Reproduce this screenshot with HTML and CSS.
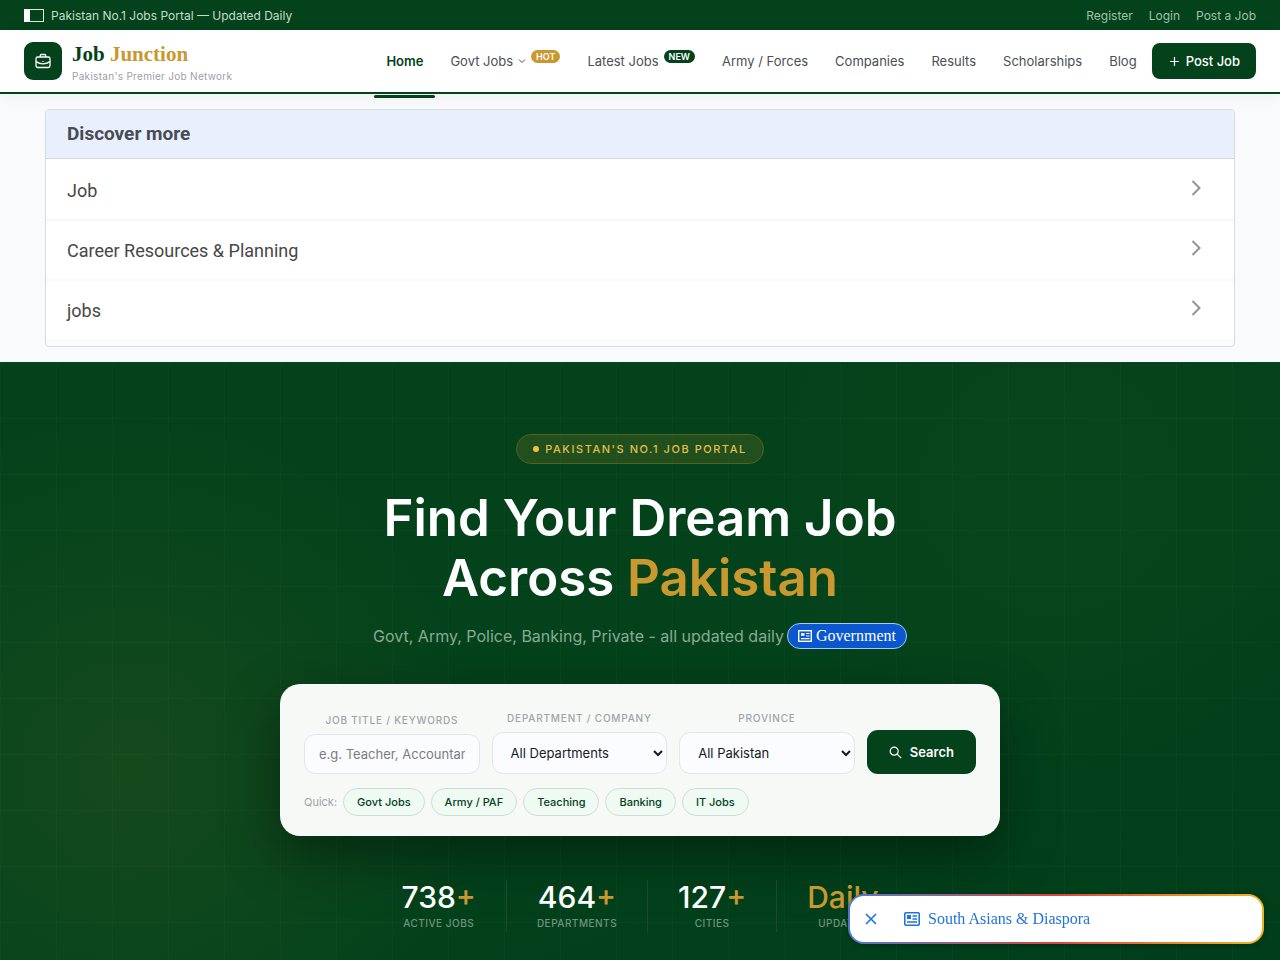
FILE: index.html
```
<!DOCTYPE html>
<html lang="en">
<head>
	<meta charset="utf-8">
	<meta name="viewport" content="width=device-width, initial-scale=1">
	<title>Job Junction</title>
	<link rel="stylesheet" href="styles.css">
</head>

<body>

	<div class="topbar">
		<div class="topbar-left">
			<span class="flag"></span>
			<span>Pakistan No.1 Jobs Portal — Updated Daily</span>
		</div>
		<div class="topbar-links">
			<a href="#">Register</a>
			<a href="#">Login</a>
			<a href="#">Post a Job</a>
		</div>
	</div>

	<header class="header">
		<a href="#" class="brand">
			<span class="brand-icon">
				<svg width="16" height="16" viewBox="0 0 16 16" fill="none" stroke="#fff" stroke-width="1.3" stroke-linejoin="round">
					<rect x="1" y="4" width="14" height="10.5" rx="1.8"/>
					<path d="M5.3 4V2.5a1 1 0 0 1 1-1h3.4a1 1 0 0 1 1 1V4M1 8.600c2 1.400 4.300 2.200 7 2.200s5-.8 7-2.200M8 8v1"/>
				</svg>
			</span>
			<span class="brand-text">
				<span class="brand-name">Job <em>Junction</em></span>
				<span class="brand-tag">Pakistan's Premier Job Network</span>
			</span>
		</a>
		<nav class="nav">
			<a href="#" class="active">Home</a>
			<a href="#">Govt Jobs
				<svg class="caret" width="8" height="8" viewBox="0 0 8 8" fill="none" stroke="currentColor"><path d="M1 2.500l3 3 3-3"/></svg>
				<span class="tag tag-hot">HOT</span>
			</a>
			<a href="#">Latest Jobs <span class="tag tag-new">NEW</span></a>
			<a href="#">Army / Forces</a>
			<a href="#">Companies</a>
			<a href="#">Results</a>
			<a href="#">Scholarships</a>
			<a href="#">Blog</a>
			<a href="#" class="post-btn">
				<svg width="9" height="9" viewBox="0 0 9 9" stroke="currentColor" stroke-width="1.200"><path d="M4.500 0v9M0 4.500h9"/></svg>
				Post Job
			</a>
		</nav>
	</header>

	<section class="discover">
		<h2>Discover more</h2>
		<a href="#">Job
			<svg width="11" height="18" viewBox="0 0 11 18" fill="none" stroke="currentColor" stroke-width="2"><path d="M1.500 2l7 7-7 7"/></svg>
		</a>
		<a href="#">Career Resources &amp; Planning
			<svg width="11" height="18" viewBox="0 0 11 18" fill="none" stroke="currentColor" stroke-width="2"><path d="M1.500 2l7 7-7 7"/></svg>
		</a>
		<a href="#">jobs
			<svg width="11" height="18" viewBox="0 0 11 18" fill="none" stroke="currentColor" stroke-width="2"><path d="M1.500 2l7 7-7 7"/></svg>
		</a>
	</section>

	<main class="hero">
		<div class="badge"><i></i>Pakistan's No.1 Job Portal</div>
		<h1>Find Your Dream Job<br>Across <span>Pakistan</span></h1>
		<p class="lead">
			<span>Govt, Army, Police, Banking, Private - all updated daily</span>
			<a href="#" class="gov">
				<svg width="14" height="12" viewBox="0 0 14 12" fill="none" stroke="currentColor"><rect x=".7" y=".7" width="12.600" height="10.600" stroke-width="1.400"/><path d="M3 4.500h3.500" stroke-width="2.600"/><path d="M8 3.500h3.500M8 6h3.500M3 8.700h8.500" stroke-width="1.200"/></svg>
				Government
			</a>
		</p>

		<form class="search">
			<div class="search-row">
				<div class="field">
					<label for="keywords">Job Title / Keywords</label>
					<input type="text" id="keywords" placeholder="e.g. Teacher, Accountant">
				</div>
				<div class="field">
					<label for="department">Department / Company</label>
					<select id="department"><option>All Departments</option></select>
				</div>
				<div class="field">
					<label for="province">Province</label>
					<select id="province"><option>All Pakistan</option></select>
				</div>
				<button type="submit" class="search-btn">
					<svg width="13" height="13" viewBox="0 0 13 13" fill="none" stroke="currentColor" stroke-width="1.200"><circle cx="5.200" cy="5.200" r="4"/><path d="M8.200 8.200l4 4"/></svg>
					Search
				</button>
			</div>
			<div class="quick">
				<span>Quick:</span>
				<a href="#">Govt Jobs</a>
				<a href="#">Army / PAF</a>
				<a href="#">Teaching</a>
				<a href="#">Banking</a>
				<a href="#">IT Jobs</a>
			</div>
		</form>

		<div class="stats">
			<div class="stat"><strong>738<b>+</b></strong><span>Active Jobs</span></div>
			<div class="stat"><strong>464<b>+</b></strong><span>Departments</span></div>
			<div class="stat"><strong>127<b>+</b></strong><span>Cities</span></div>
			<div class="stat"><strong><b>Daily</b></strong><span>Updates</span></div>
		</div>
	</main>

	<div class="toast">
		<button type="button" aria-label="Close">
			<svg width="12" height="12" viewBox="0 0 12 12" stroke="currentColor" stroke-width="1.700"><path d="M1 1l10 10M11 1L1 11"/></svg>
		</button>
		<a href="#">
			<svg width="16" height="14" viewBox="0 0 16 14" fill="none" stroke="currentColor"><rect x=".8" y=".8" width="14.400" height="12.400" rx="1" stroke-width="1.600"/><path d="M3 5h4" stroke-width="4"/><path d="M8.500 4H13M8.500 7H13M3 10h10" stroke-width="1.400"/></svg>
			South Asians &amp; Diaspora
		</a>
	</div>

</body>
</html>
```
FILE: styles.css
```
* {
	box-sizing: border-box;
	margin: 0;
	padding: 0;
}
body {
	font-family: Inter, "Open Sans", sans-serif;
	font-size: 13px;
	color: #4a4f55;
	background: #f8fafc;
}
a {
	color: inherit;
	text-decoration: none;
}

/* top bar */
.topbar {
	display: flex;
	justify-content: space-between;
	align-items: center;
	height: 30px;
	padding: 0 24px;
	font-size: 12px;
	color: #c4dccb;
	background: #03421b;
}
.topbar-left {
	display: flex;
	align-items: center;
	gap: 7px;
}
.flag {
	width: 20px;
	height: 13px;
	border: 1px solid #dcebe0;
	border-left: 6px solid #fff;
}
.topbar-links {
	display: flex;
	gap: 16px;
	color: #9fc2aa;
}

/* header */
.header {
	display: flex;
	justify-content: space-between;
	align-items: center;
	height: 64px;
	padding: 0 24px;
	background: #fff;
	border-bottom: 2px solid #03421b;
	box-shadow: 0 2px 14px rgba(0,0,0,.05);
}
.brand {
	display: flex;
	align-items: center;
	gap: 10px;
}
.brand-icon {
	display: flex;
	align-items: center;
	justify-content: center;
	width: 38px;
	height: 38px;
	border-radius: 9px;
	background: #03421b;
}
.brand-text {
	display: flex;
	flex-direction: column;
	padding-top: 2px;
}
.brand-name {
	font: bold 21px/28px "Liberation Serif", serif;
	color: #03421b;
}
.brand-name em {
	font-style: normal;
	color: #c9982f;
}
.brand-tag {
	font-size: 10px;
	line-height: 16px;
	letter-spacing: .03em;
	color: #9a9fa6;
}
.nav {
	display: flex;
	align-items: center;
	gap: 3px;
	white-space: nowrap;
}
.nav a {
	position: relative;
	display: flex;
	align-items: center;
	gap: 5px;
	height: 36px;
	padding: 0 12px;
}
.nav .active {
	font-weight: 600;
	color: #03421b;
}
.nav .active::after {
	content: "";
	position: absolute;
	left: 0;
	right: 0;
	bottom: -19px;
	height: 3px;
	border-radius: 2px;
	background: #03421b;
}
.tag {
	padding: 0 5px;
	margin-bottom: 9px;
	font-size: 9px;
	line-height: 13px;
	font-weight: 600;
	color: #fff;
	border-radius: 7px;
}
.tag-hot {
	background: #c9982f;
}
.tag-new {
	background: #03421b;
}
.nav .post-btn {
	gap: 7px;
	padding: 0 16px 0 18px;
	font-weight: 500;
	color: #fff;
	border-radius: 8px;
	background: #03421b;
}

/* discover box */
.discover {
	margin: 15px 45px;
	padding-bottom: 7px;
	border: 1px solid #d5dbe1;
	border-radius: 4px;
	background: #fafbfb;
	font-family: Roboto, sans-serif;
	font-size: 18px;
	color: #474747;
	overflow: hidden;
}
.discover h2 {
	padding: 0 21px;
	font-size: 19px;
	line-height: 48px;
	color: #474b52;
	background: #e9effd;
	border-bottom: 1px solid #d5dbe1;
}
.discover a {
	display: flex;
	justify-content: space-between;
	align-items: center;
	height: 60px;
	padding: 0 32px 0 21px;
	background: #fff;
	border-top: 2px solid #f6f7f8;
}
.discover h2 + a {
	border-top-color: #fff;
}
.discover svg {
	margin-bottom: 5px;
	color: #929497;
}

/* hero */
.hero {
	display: flex;
	flex-direction: column;
	align-items: center;
	padding: 72px 24px 56px;
	text-align: center;
	color: #fff;
	background:
		linear-gradient(rgba(255,255,255,.025) 1px, transparent 1px) 0 0 / 56px 56px,
		linear-gradient(90deg, rgba(255,255,255,.025) 1px, transparent 1px) 0 0 / 56px 56px,
		radial-gradient(circle at 10% 65%, rgba(150,130,40,.12), transparent 360px),
		radial-gradient(circle at 82% 20%, rgba(201,152,47,.03), transparent 300px),
		linear-gradient(160deg, #03421b 0%, #03421b 60%, #003d1a 100%);
}
.badge {
	display: flex;
	align-items: center;
	gap: 6px;
	height: 30px;
	padding: 0 16px;
	font-size: 11px;
	font-weight: 500;
	letter-spacing: .14em;
	text-transform: uppercase;
	color: #e3bf4a;
	border: 1px solid #57601c;
	border-radius: 15px;
	background: rgba(201,152,47,.16);
}
.badge i {
	width: 6px;
	height: 6px;
	border-radius: 50%;
	background: #efc443;
}
.hero h1 {
	margin-top: 24px;
	font-size: 51px;
	line-height: 60px;
	font-weight: 600;
}
.hero h1 span {
	color: #c9982f;
}
.lead {
	display: flex;
	flex-wrap: wrap;
	align-items: center;
	justify-content: center;
	gap: 3px;
	margin-top: 15px;
	font-size: 16px;
	color: #88ab93;
}
.gov {
	display: flex;
	align-items: center;
	gap: 4px;
	height: 26px;
	padding: 0 10px;
	font-family: "Liberation Serif", serif;
	font-size: 16px;
	color: #fff;
	border: 1px solid #a9c8f2;
	border-radius: 13px;
	background: #0b57d0;
}
.search {
	width: 100%;
	max-width: 720px;
	margin-top: 35px;
	padding: 24px 24px 20px;
	border-radius: 20px;
	background: #f7f9f7;
	box-shadow: 0 20px 56px rgba(0,0,0,.4);
}
.search-row {
	display: flex;
	align-items: flex-end;
	gap: 12px;
}
.field {
	display: flex;
	flex: 1;
	flex-direction: column;
	gap: 4px;
	min-width: 0;
}
.field label {
	font-size: 10px;
	line-height: 20px;
	font-weight: 500;
	letter-spacing: .08em;
	text-transform: uppercase;
	white-space: nowrap;
	color: #9fa4a9;
}
.field input,
.field select {
	width: 100%;
	height: 42px;
	padding: 0 14px;
	font: 13px Inter, sans-serif;
	color: #16191f;
	border: 1px solid #e2e7ec;
	border-radius: 11px;
	background: #fafcff;
}
.field input {
	height: 40px;
}
.field input::placeholder {
	color: #7b7d80;
}
.field select {
	padding: 0 0 0 14px;
}
.search-btn {
	display: flex;
	align-items: center;
	gap: 8px;
	height: 44px;
	padding: 0 22px;
	font: 600 13px Inter, sans-serif;
	color: #fff;
	border: 0;
	border-radius: 11px;
	background: #03421b;
}
.quick {
	display: flex;
	flex-wrap: wrap;
	align-items: center;
	gap: 6px;
	margin-top: 14px;
	font-size: 11px;
	color: #a0a5a9;
}
.quick a {
	padding: 0 13px;
	line-height: 26px;
	font-weight: 500;
	color: #03421b;
	border: 1px solid #cddfd4;
	border-radius: 14px;
	background: #effaf3;
}
.stats {
	display: flex;
	justify-content: center;
	margin-top: 44px;
}
.stat {
	display: flex;
	flex-direction: column;
	padding: 0 30px;
	border-left: 1px solid #1b4a2d;
}
.stat:first-child {
	border-left: 0;
}
.stat strong {
	font-size: 30px;
	line-height: 34px;
	font-weight: 500;
}
.stat b {
	font-weight: 500;
	color: #c9982f;
}
.stat span {
	font-size: 10px;
	line-height: 18px;
	font-weight: 500;
	letter-spacing: .05em;
	text-transform: uppercase;
	color: #71937c;
}

/* floating suggestion, stays over the page */
.toast {
	position: fixed;
	right: 16px;
	bottom: 16px;
	display: flex;
	align-items: center;
	gap: 27px;
	width: 416px;
	max-width: calc(100% - 32px);
	height: 50px;
	padding: 0 15px;
	border: 2px solid transparent;
	border-radius: 16px;
	background:
		linear-gradient(#fff, #fff) padding-box,
		linear-gradient(90deg, #5078d2, #d8483e 50%, #f0b323) border-box;
	box-shadow: 0 1px 5px rgba(0,0,0,.3);
	font-family: "Liberation Serif", serif;
	font-size: 16px;
	color: #2374d8;
}
.toast button {
	display: flex;
	color: #2374d8;
	border: 0;
	background: none;
}
.toast a {
	display: flex;
	align-items: center;
	gap: 8px;
}
```
